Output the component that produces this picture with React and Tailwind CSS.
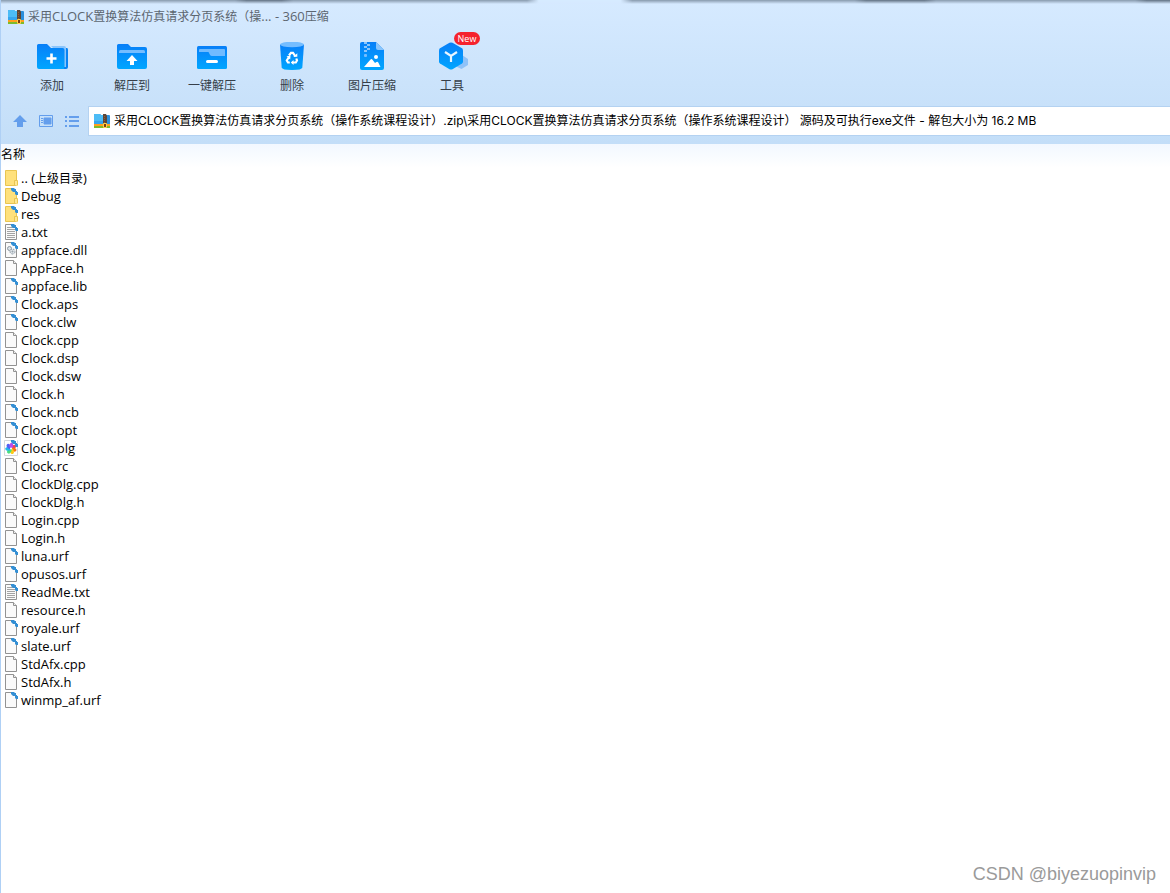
const files = [
  { name: '.. (上级目录)', type: 'folder' },
  { name: 'Debug', type: 'folder', linked: true },
  { name: 'res', type: 'folder', linked: true },
  { name: 'a.txt', type: 'text', linked: true },
  { name: 'appface.dll', type: 'dll', linked: true },
  { name: 'AppFace.h', type: 'file' },
  { name: 'appface.lib', type: 'file', linked: true },
  { name: 'Clock.aps', type: 'file', linked: true },
  { name: 'Clock.clw', type: 'file', linked: true },
  { name: 'Clock.cpp', type: 'file' },
  { name: 'Clock.dsp', type: 'file' },
  { name: 'Clock.dsw', type: 'file' },
  { name: 'Clock.h', type: 'file' },
  { name: 'Clock.ncb', type: 'file', linked: true },
  { name: 'Clock.opt', type: 'file', linked: true },
  { name: 'Clock.plg', type: 'plugin', linked: true },
  { name: 'Clock.rc', type: 'file' },
  { name: 'ClockDlg.cpp', type: 'file' },
  { name: 'ClockDlg.h', type: 'file' },
  { name: 'Login.cpp', type: 'file' },
  { name: 'Login.h', type: 'file' },
  { name: 'luna.urf', type: 'file', linked: true },
  { name: 'opusos.urf', type: 'file', linked: true },
  { name: 'ReadMe.txt', type: 'text', linked: true },
  { name: 'resource.h', type: 'file' },
  { name: 'royale.urf', type: 'file', linked: true },
  { name: 'slate.urf', type: 'file', linked: true },
  { name: 'StdAfx.cpp', type: 'file' },
  { name: 'StdAfx.h', type: 'file' },
  { name: 'winmp_af.urf', type: 'file', linked: true },
]

const tools = [
  { label: '添加', Icon: AddIcon },
  { label: '解压到', Icon: ExtractIcon },
  { label: '一键解压', Icon: QuickIcon },
  { label: '删除', Icon: TrashIcon },
  { label: '图片压缩', Icon: PictureIcon },
  { label: '工具', Icon: ToolsIcon, isNew: true },
]

const petals = ['#f43f5e', '#f97316', '#facc15', '#4ade80', '#22b8e8', '#4f62f5', '#b64cf0']

// Latin runs are set one pixel larger than the Chinese ones
function MixedText({ children }) {
  return children.split(/([\u4e00-\u9fff（）]+)/).filter(Boolean).map((run, i) => (
    <span key={i} className={/[\u4e00-\u9fff（）]/.test(run) ? 'text-[12px]' : 'text-[13px]'}>{run}</span>
  ))
}

function AddIcon() {
  return (
    <svg width="32" height="32" viewBox="0 0 32 32">
      <path d="M4 6H31Q32 6 32 8V25Q32 27 30 27H10Z" fill="#0783f3" />
      <path d="M1 3.500Q1 2 2.500 2H11L15 6H28Q30 6 30 8V25H28V27H3Q1 27 1 25Z" fill="url(#blue)" />
      <path d="M15 4H28Q30 4 30 6V25H28.500V8Q28.500 6 26.500 6H17Z" fill="#8ac5fc" />
      <path d="M15.500 11.500V21.500M10.500 16.500H20.500" stroke="#fff" strokeWidth="2.600" />
    </svg>
  )
}

function ExtractIcon() {
  return (
    <svg width="32" height="32" viewBox="0 0 32 32">
      <path d="M1 3.500Q1 2 2.500 2H12L15 5H29Q31 5 31 7V25Q31 27 29 27H3Q1 27 1 25Z" fill="url(#blue)" />
      <path d="M3 11V9.500Q3 8 4.500 8H27.500Q29 8 29 9.500V11Z" fill="#75bdff" />
      <path d="M16 13L21.500 19H18V23H14V19H10.500Z" fill="#fff" />
    </svg>
  )
}

function QuickIcon() {
  return (
    <svg width="32" height="32" viewBox="0 0 32 32">
      <rect x="1" y="4" width="30" height="23" rx="1.500" fill="url(#blue)" />
      <path d="M3 10V8Q3 7 4 7H28Q29 7 29 8V14H16Q14.500 14 13.800 12.500L12.500 10Z" fill="#70bbff" />
      <rect x="10" y="18" width="12" height="3" rx="1.500" fill="#fff" />
    </svg>
  )
}

function TrashIcon() {
  return (
    <svg width="32" height="32" viewBox="0 0 32 32">
      <path d="M4 2.500H28L26.300 25.500Q26 28 16 28Q6 28 5.700 25.500Z" fill="url(#blue)" />
      <ellipse cx="16" cy="2.500" rx="12" ry="2.800" fill="#75bdff" />
      <g fill="none" stroke="#fff" strokeWidth="2.200">
        <path d="M13 13.500L15 10.800H17L19.500 14.500M20.300 16.500L21 18.500L19.800 20.500H16.500M13.800 20.500H12L10.800 18.500L13 15" />
      </g>
      <path d="M17.300 14.800H21.300V11.300ZM17.500 18V23L14.800 20.500ZM10.500 14.200L14.500 13.800L14.200 17.500Z" fill="#fff" />
    </svg>
  )
}

function PictureIcon() {
  return (
    <svg width="32" height="32" viewBox="0 0 32 32">
      <path d="M4 2Q4 0 6 0H20L28 8V26Q28 28 26 28H6Q4 28 4 26Z" fill="url(#blue)" />
      <path d="M20 0L28 8H22Q20 8 20 6Z" fill="#8ac5fc" />
      <path d="M8 0H11V2H8ZM11 2H14V4H11ZM8 4H11V6H8ZM11 6H14V8H11ZM8 8H11V10H8Z" fill="#8ac5fc" />
      <rect x="8" y="12" width="3" height="3" rx="1" fill="#75bdff" />
      <circle cx="20" cy="15" r="2" fill="#fff" />
      <path d="M8 25L14.500 17.500Q15.500 16.500 16.500 17.800L19 21L20.500 20Q21.500 19.300 22.300 20.500L24.500 25Z" fill="#fff" />
    </svg>
  )
}

function ToolsIcon() {
  return (
    <svg width="32" height="32" viewBox="0 0 32 32">
      <path d="M26 13L32 17V23L25.500 27L19 24Z" fill="#8fc2f8" />
      <path d="M13.500 0.800Q15 0 16.500 0.800L26 6.200Q27 7 27 8.500V19.500Q27 21 26 21.600L16.500 27.200Q15 28 13.500 27.200L4 21.600Q3 21 3 19.500V8.500Q3 7 4 6.200Z" fill="url(#blue)" />
      <path d="M9 10L15 14L21 10M15 14V20" fill="none" stroke="#e9f6ff" strokeWidth="2.200" />
    </svg>
  )
}

function ArchiveIcon() {
  return (
    <svg width="16" height="16" viewBox="0 0 16 16" className="shrink-0">
      <path d="M0 2Q0 1 1 1H6L7 2H15Q16 2 16 3V12H0Z" fill="#2b8fdc" />
      <path d="M0 2Q0 1 1 1H6L7 2H9V11H0Z" fill="#4cbcf6" />
      <path d="M0 8H9V11H0Z" fill="#36a5ee" />
      <path d="M0 11H16V13H0Z" fill="#ff9f1c" />
      <path d="M0 13H16V15H0Z" fill="#7dbb2c" />
      <path d="M9 1H12L13 3V11H9Z" fill="#5c4638" />
      <path d="M10.500 3V10" stroke="#9a5a2c" strokeDasharray="1 1" />
      <path d="M9.500 10.500H12.500V14.500H9.500Z" fill="#7a3f12" stroke="#ffd04a" />
    </svg>
  )
}

function FileIcon({ type, linked }) {
  return (
    <svg width="16" height="16" viewBox="0 0 16 16" className="shrink-0">
      {type === 'folder' && (
        <>
          <path d="M1.500 0.500H12.500V15.500H1.500Z" fill="#ffe17c" stroke="#e9c551" />
          <path d="M10.500 15V10.500H13.500V15.500" fill="#ffe894" stroke="#e9c551" />
        </>
      )}
      {type === 'plugin' && (
        <>
          <path d="M0.500 0.500H13.500V15.500H0.500Z" fill="#fff" stroke="#d3d7dc" />
          {petals.map((color, i) => (
            <ellipse key={color} cx="7" cy="5.500" rx="1.900" ry="2.800" fill={color} transform={`rotate(${i * 51 + 60} 7 8.500)`} />
          ))}
          <circle cx="7" cy="8.500" r="1" fill="#fff" />
        </>
      )}
      {['file', 'text', 'dll'].includes(type) && (
        <>
          <path d="M1.500 0.500H9.500L12.500 3.500V15.500H1.500Z" fill="#fafafa" stroke="#929292" />
          <path d="M9.500 0.500V3.500H12.500" fill="#eee" stroke="#929292" />
        </>
      )}
      {type === 'text' && <path d="M3 3.500H9M3 5.500H11M3 7.500H11M3 9.500H11M3 11.500H11M3 13.500H11" stroke="#a3a3a3" />}
      {type === 'dll' && (
        <g fill="#dde3e8" stroke="#8e9aa4">
          <circle cx="5.500" cy="6.500" r="2" />
          <circle cx="8.500" cy="9.500" r="2.500" strokeDasharray="2 1" />
          <circle cx="8.500" cy="9.500" r="0.500" />
        </g>
      )}
      {linked && (
        <>
          <path d="M9 0H13V4H11Z" fill="#fff" />
          <path d="M7 0H10L11 1H12V3H13V4H14V7H12L11 6V4H9L7 2Z" fill="#348fd4" />
        </>
      )}
    </svg>
  )
}

export default function App() {
  return (
    <div className="min-h-screen flex flex-col bg-white border-l border-[#afd0f5] text-black font-['Open_Sans','Noto_Sans_CJK_SC',sans-serif]">
      {/* Shared fill of the toolbar icons */}
      <svg width="0" height="0" className="absolute" aria-hidden="true">
        <defs>
          <linearGradient id="blue" x1="0" y1="0" x2="0" y2="1">
            <stop offset="0" stopColor="#087ff8" />
            <stop offset="1" stopColor="#00a6ff" />
          </linearGradient>
        </defs>
      </svg>

      <header className="bg-linear-to-b from-[#d6eaff] to-[#c3def8]">
        {/* Shadow of the window behind */}
        <div className="h-1 mask-b-from-0% bg-[linear-gradient(90deg,#8799ad_20%,#5f6f81_21%,#5f6f81_24%,#8799ad_25%,#8799ad_45%,#d6eaff_46%,#d6eaff_53%,#8799ad_54%,#8799ad_73%,#5f6f81_74%,#5f6f81_79%,#8799ad_80%,#8799ad_97%,#5f6f81_98%)]" />

        <div className="h-[26px] flex items-center gap-1 pl-[7px]">
          <ArchiveIcon />
          <h1 className="flex items-baseline whitespace-pre text-[#5c6670]">
            <MixedText>采用CLOCK置换算法仿真请求分页系统（操... - 360压缩</MixedText>
          </h1>
        </div>

        <nav className="flex pt-3 pl-[11px] pb-2">
          {tools.map(({ label, Icon, isNew }) => (
            <button key={label} className="relative w-20 h-[54px] flex flex-col items-center gap-[2px] text-[12px] leading-5 text-[#363f49]">
              <Icon />
              <span>{label}</span>
              {isNew && (
                <span className="absolute left-[42px] -top-[10px] w-[26px] h-[13px] rounded-full bg-[#f5222d] text-center text-[9px] leading-[13px] text-white">New</span>
              )}
            </button>
          ))}
        </nav>

        <div className="flex items-center pb-2 pt-[2px]">
          <div className="flex items-center gap-3 w-[87px] pl-3 shrink-0">
            <button aria-label="向上">
              <svg width="14" height="14" viewBox="0 0 14 14"><path d="M7 1L14 8H10V13H4V8H0Z" fill="#649eec" /></svg>
            </button>
            <button aria-label="视图">
              <svg width="14" height="14" viewBox="0 0 14 14" fill="none" stroke="#649eec">
                <path d="M0.500 1.500H13.500V12.500H0.500Z" />
                <path d="M2 4.500H4M2 6.500H4M2 8.500H4" />
                <path d="M5 4H12V10H5Z" fill="#649eec" />
              </svg>
            </button>
            <button aria-label="列表">
              <svg width="14" height="14" viewBox="0 0 14 14" stroke="#649eec" strokeWidth="2">
                <path d="M0 3H2M0 7H2M0 12H2M4 3H14M4 7H14M4 12H14" />
              </svg>
            </button>
          </div>
          <label className="flex-1 h-[30px] flex items-center gap-1 pl-[5px] bg-white border-y border-l border-[#b4d2f1]">
            <ArchiveIcon />
            <input
              aria-label="路径"
              className="flex-1 min-w-0 bg-transparent outline-none text-[12px] font-['Inter','Noto_Sans_CJK_SC',sans-serif]"
              defaultValue="采用CLOCK置换算法仿真请求分页系统（操作系统课程设计）.zip\采用CLOCK置换算法仿真请求分页系统（操作系统课程设计） 源码及可执行exe文件 - 解包大小为 16.2 MB"
            />
          </label>
        </div>
      </header>

      <main className="flex-1 bg-linear-to-b from-[#f2f8ff] to-white to-[24px]">
        <table className="w-full text-left">
          <thead>
            <tr>
              <th className="h-[25px] p-0 pb-1 text-[12px] leading-5 font-normal">名称</th>
            </tr>
          </thead>
          <tbody>
            {files.map(file => (
              <tr key={file.name}>
                <td className="p-0">
                  <div className="h-[18px] flex items-center gap-px pl-[3px]">
                    <FileIcon type={file.type} linked={file.linked} />
                    <span className="flex items-baseline whitespace-pre leading-[18px]">
                      <MixedText>{file.name}</MixedText>
                    </span>
                  </div>
                </td>
              </tr>
            ))}
          </tbody>
        </table>
      </main>

      <footer className="pr-[14px] pb-[7px] text-right text-[18px] leading-6 text-[#9a9a9a] font-['Liberation_Sans',sans-serif]">
        CSDN @biyezuopinvip
      </footer>
    </div>
  )
}
